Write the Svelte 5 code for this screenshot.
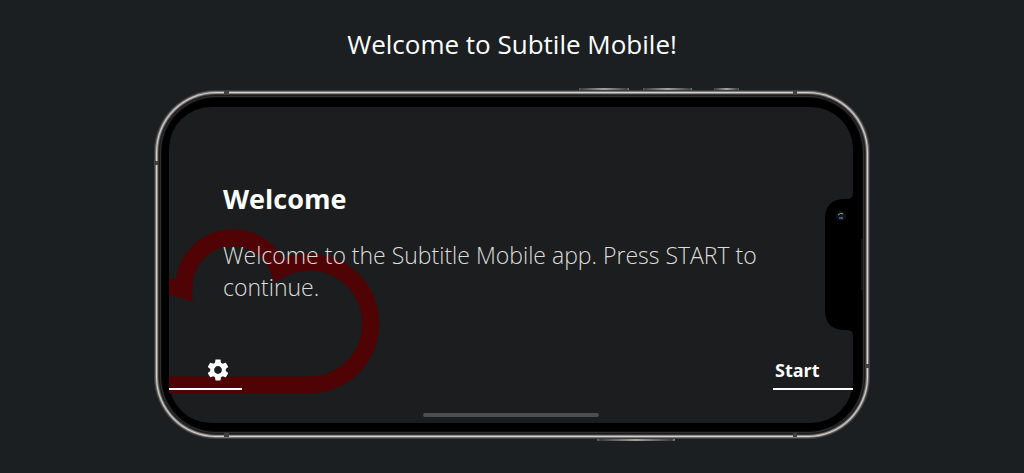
<script>
  let title = "Welcome to Subtile Mobile!";
  let heading = "Welcome";
  let text = "Welcome to the Subtitle Mobile app. Press START to continue.";

  // hardware buttons along the edges of the frame
  let buttons = [
    { x: 425, y: -2, width: 50 },
    { x: 489, y: -2, width: 49 },
    { x: 560, y: -2, width: 25 },
    { x: 443, y: 346, width: 78 },
  ];

  // antenna gaps
  let gaps = [
    { x: 70, y: 1, width: 5, height: 4 },
    { x: 639, y: 1, width: 4, height: 4 },
    { x: 70, y: 343, width: 5, height: 4 },
    { x: 639, y: 343, width: 4, height: 4 },
    { x: 0, y: 71, width: 4, height: 4 },
    { x: 711, y: 274, width: 4, height: 4 },
  ];
</script>

<main>
  <h1>{title}</h1>

  <div class="phone">
    <svg class="frame" viewBox="0 0 716 349" preserveAspectRatio="none" aria-hidden="true">
      <defs>
        <linearGradient id="metal">
          <stop offset="0" stop-color="#777" />
          <stop offset="0.04" stop-color="#3c3d3d" />
          <stop offset="0.5" stop-color="#a2a3a1" />
          <stop offset="0.96" stop-color="#3c3d3d" />
          <stop offset="1" stop-color="#999" />
        </linearGradient>
      </defs>
      {#each buttons as b}
        <rect x={b.x} y={b.y} width={b.width} height="5" rx="1" fill="url(#metal)" />
      {/each}
      <rect width="716" height="349" rx="62" fill="#3d3c3b" />
      <rect x="1" y="1" width="714" height="347" rx="61" fill="#777573" />
      <rect x="2" y="2" width="712" height="345" rx="60" fill="#d3d0cc" />
      <rect x="3" y="3" width="710" height="343" rx="59" fill="#8a8886" />
      <rect x="4" y="4" width="708" height="341" rx="58" fill="#343434" />
      <rect x="5" y="5" width="706" height="339" rx="57" fill="#1b1b1b" />
      <rect x="6" y="6" width="704" height="337" rx="56" fill="#303030" />
      <rect x="7" y="7" width="702" height="335" rx="55" fill="#0c0c0c" />
      <rect x="8" y="8" width="700" height="333" rx="54" fill="#000" />
      {#each gaps as g}
        <rect {...g} fill="#3f3f3f" />
      {/each}
    </svg>

    <div class="screen">
      <svg class="cloud" width="230" height="316" viewBox="0 0 230 316" aria-hidden="true">
        <path
          d="M-20 180C-6 178 6 180 15 183V181A49 49 0 0 1 110 163A61.5 61.5 0 1 1 141 278H-20"
          fill="none"
          stroke="#500304"
          stroke-width="17"
        />
      </svg>

      <section>
        <h2>{heading}</h2>
        <p>{text}</p>
      </section>

      <nav>
        <button class="settings" aria-label="Settings">
          <svg width="26" height="26" viewBox="0 0 24 24" fill="currentColor">
            <path
              d="M19.14 12.94c.04-.3.06-.61.06-.94 0-.32-.02-.64-.07-.94l2.03-1.58c.18-.14.23-.41.12-.61l-1.92-3.32c-.12-.22-.37-.29-.59-.22l-2.39.96c-.5-.38-1.03-.7-1.62-.94l-.36-2.54c-.04-.24-.24-.41-.48-.41h-3.84c-.24 0-.43.17-.47.41l-.36 2.54c-.59.24-1.13.57-1.62.94l-2.39-.96c-.22-.08-.47 0-.59.22L2.74 8.87c-.12.21-.08.47.12.61l2.03 1.58c-.05.3-.09.63-.09.94s.02.64.07.94l-2.03 1.58c-.18.14-.23.41-.12.61l1.92 3.32c.12.22.37.29.59.22l2.39-.96c.5.38 1.03.7 1.62.94l.36 2.54c.05.24.24.41.48.41h3.84c.24 0 .44-.17.47-.41l.36-2.54c.59-.24 1.13-.56 1.62-.94l2.39.96c.22.08.47 0 .59-.22l1.92-3.32c.12-.22.07-.47-.12-.61l-2.01-1.58zM12 15.6c-1.98 0-3.6-1.62-3.6-3.6s1.62-3.6 3.6-3.6 3.6 1.62 3.6 3.6-1.62 3.6-3.6 3.6z"
            />
          </svg>
        </button>
        <button class="start">Start</button>
      </nav>

      <div class="home"></div>

      <svg class="notch" width="46" height="132" viewBox="0 0 46 132" aria-hidden="true">
        <path d="M28 -5Q28 1 22 1H20Q0 1 0 21V112Q0 132 20 132H22Q28 132 28 138H36V-5Z" fill="#000" />
        <rect x="36" y="41" width="2" height="51" fill="#151515" />
        <circle cx="16" cy="18" r="5" fill="#111415" />
        <path d="M13 17Q16 14 18 16" fill="none" stroke="#8aa79d" stroke-width="1" />
        <path d="M14 20H16" stroke="#2357a0" stroke-width="2" />
        <path d="M16 20H18" stroke="#9aa4a5" />
      </svg>
    </div>
  </div>
</main>

<style>
  :global(body) {
    margin: 0;
    background-color: #1b1f21;
  }

  main {
    box-sizing: border-box;
    min-height: 100vh;
    padding: 26px 16px 32px;
    display: flex;
    flex-direction: column;
    align-items: center;
    gap: 28px;
    color: #ffffff;
    font-family: "Open Sans", sans-serif;
  }

  h1 {
    margin: 0;
    font-size: 26px;
    font-weight: 400;
    line-height: 36px;
  }

  .phone {
    position: relative;
    box-sizing: border-box;
    width: 100%;
    max-width: 716px;
    padding: 17px 17px 16px 15px;
  }

  .frame {
    position: absolute;
    top: 0;
    left: 0;
    width: 100%;
    height: 100%;
    overflow: visible;
  }

  .screen {
    position: relative;
    display: flex;
    flex-direction: column;
    border-radius: 42px;
    background-color: #1c1d1e;
  }

  .cloud {
    position: absolute;
    top: 0;
    left: 0;
  }

  section {
    position: relative;
    padding: 72px 54px 50px;
  }

  h2 {
    margin: 0 0 20px;
    font-size: 27px;
    font-weight: 700;
    line-height: 40px;
  }

  p {
    margin: 0;
    color: #dddddd;
    font-size: 23px;
    font-weight: 300;
    line-height: 32px;
  }

  nav {
    position: relative;
    display: flex;
    justify-content: space-between;
  }

  button {
    box-sizing: border-box;
    height: 37px;
    border: 0;
    border-bottom: 2px solid #ffffff;
    background: none;
    color: #ffffff;
    font-family: inherit;
    font-size: 18px;
    font-weight: 700;
    cursor: pointer;
  }

  .settings {
    display: flex;
    width: 73px;
    padding: 4px 10px 0 36px;
  }

  .start {
    width: 80px;
    padding: 0 34px 2px 2px;
    text-align: left;
  }

  .home {
    width: 176px;
    height: 4px;
    margin: 23px auto 6px;
    border-radius: 2px;
    background-color: #4e4e4f;
  }

  .notch {
    position: absolute;
    top: 91px;
    right: -18px;
    overflow: visible;
  }
</style>
